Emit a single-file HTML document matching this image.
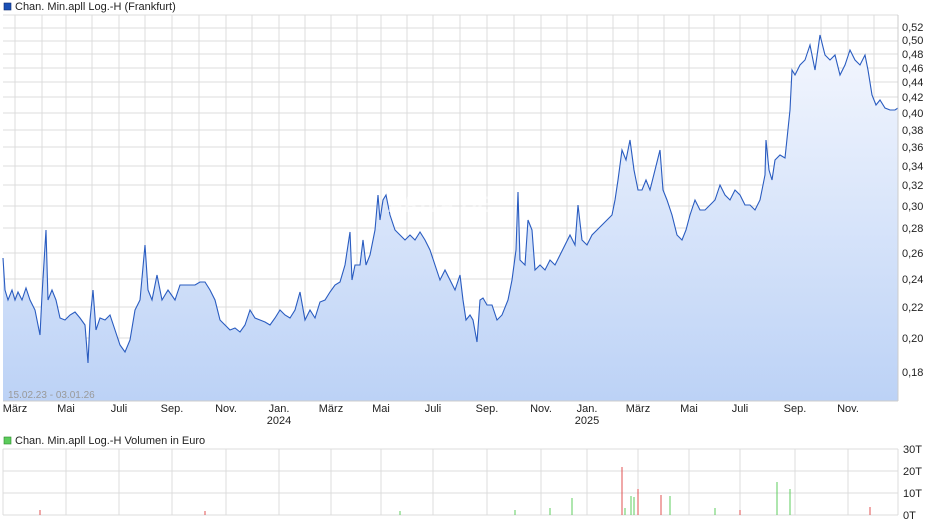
<!DOCTYPE html><html><head><style>body{margin:0;background:#fff;font-family:"Liberation Sans",sans-serif;}svg text{font-family:"Liberation Sans",sans-serif;font-size:11px;fill:#222}</style></head><body>
<svg width="940" height="526" xmlns="http://www.w3.org/2000/svg">
<defs><linearGradient id="g" x1="0" y1="0" x2="0" y2="1"><stop offset="0" stop-color="#f4f7fe"/><stop offset="1" stop-color="#bcd2f6"/></linearGradient></defs>
<rect x="4" y="3" width="7" height="7" fill="#1a4fb5" stroke="#0a2a70" stroke-width="0.6"/>
<text x="15" y="10">Chan. Min.apll Log.-H (Frankfurt)</text>
<g stroke="#dcdcdc" stroke-width="1">
<line x1="3" y1="15" x2="898" y2="15"/><line x1="3" y1="28" x2="898" y2="28"/><line x1="3" y1="41" x2="898" y2="41"/><line x1="3" y1="54" x2="898" y2="54"/><line x1="3" y1="68" x2="898" y2="68"/><line x1="3" y1="82" x2="898" y2="82"/><line x1="3" y1="97" x2="898" y2="97"/><line x1="3" y1="113" x2="898" y2="113"/><line x1="3" y1="130" x2="898" y2="130"/><line x1="3" y1="147" x2="898" y2="147"/><line x1="3" y1="166" x2="898" y2="166"/><line x1="3" y1="185" x2="898" y2="185"/><line x1="3" y1="206" x2="898" y2="206"/><line x1="3" y1="228" x2="898" y2="228"/><line x1="3" y1="253" x2="898" y2="253"/><line x1="3" y1="279" x2="898" y2="279"/><line x1="3" y1="307" x2="898" y2="307"/><line x1="3" y1="338" x2="898" y2="338"/><line x1="3" y1="372" x2="898" y2="372"/>
</g>
<g stroke="#dcdcdc"><line x1="15" y1="15" x2="15" y2="401"/><line x1="42" y1="15" x2="42" y2="401"/><line x1="66" y1="15" x2="66" y2="401"/><line x1="92" y1="15" x2="92" y2="401"/><line x1="119" y1="15" x2="119" y2="401"/><line x1="145" y1="15" x2="145" y2="401"/><line x1="172" y1="15" x2="172" y2="401"/><line x1="199" y1="15" x2="199" y2="401"/><line x1="226" y1="15" x2="226" y2="401"/><line x1="252" y1="15" x2="252" y2="401"/><line x1="279" y1="15" x2="279" y2="401"/><line x1="305" y1="15" x2="305" y2="401"/><line x1="331" y1="15" x2="331" y2="401"/><line x1="357" y1="15" x2="357" y2="401"/><line x1="381" y1="15" x2="381" y2="401"/><line x1="407" y1="15" x2="407" y2="401"/><line x1="433" y1="15" x2="433" y2="401"/><line x1="460" y1="15" x2="460" y2="401"/><line x1="487" y1="15" x2="487" y2="401"/><line x1="514" y1="15" x2="514" y2="401"/><line x1="541" y1="15" x2="541" y2="401"/><line x1="567" y1="15" x2="567" y2="401"/><line x1="587" y1="15" x2="587" y2="401"/><line x1="613" y1="15" x2="613" y2="401"/><line x1="638" y1="15" x2="638" y2="401"/><line x1="664" y1="15" x2="664" y2="401"/><line x1="689" y1="15" x2="689" y2="401"/><line x1="714" y1="15" x2="714" y2="401"/><line x1="740" y1="15" x2="740" y2="401"/><line x1="768" y1="15" x2="768" y2="401"/><line x1="795" y1="15" x2="795" y2="401"/><line x1="821" y1="15" x2="821" y2="401"/><line x1="848" y1="15" x2="848" y2="401"/><line x1="874" y1="15" x2="874" y2="401"/></g>
<polygon fill="url(#g)" points="3,401 3,258 5,290 8,300 12,290 15,300 18,292 22,300 26,288 30,300 35,310 40,335 42,295 46,230 48,300 52,290 56,300 60,318 65,320 70,315 75,312 80,318 85,325 88,363 90,320 93,290 96,330 100,318 105,320 110,315 115,330 120,345 125,352 130,340 135,310 140,300 145,245 148,290 152,300 157,275 162,300 168,290 175,300 180,285 188,285 195,285 200,282 205,282 210,290 215,300 220,320 225,325 230,330 235,328 240,332 245,325 250,310 255,318 260,320 265,322 270,325 275,318 280,310 285,315 290,318 295,310 300,292 305,320 310,310 315,318 320,302 325,300 330,292 335,285 340,282 345,265 350,232 352,280 355,265 360,265 363,240 366,265 370,255 375,230 378,195 380,220 383,200 386,195 390,215 395,230 400,235 405,240 410,235 415,240 420,232 425,240 430,250 435,265 440,280 445,270 450,280 455,290 460,275 463,300 466,320 470,315 473,320 477,342 480,300 483,298 487,305 492,305 497,320 502,315 508,300 512,280 516,250 518,192 520,260 525,265 528,220 532,230 535,270 540,265 545,270 550,260 555,265 560,255 565,245 570,235 575,245 578,205 582,240 587,245 592,235 597,230 602,225 607,220 612,215 615,200 618,180 622,150 626,160 630,140 634,170 638,190 642,190 646,180 650,190 655,170 660,150 663,190 667,200 672,215 677,235 682,240 686,230 690,215 695,200 700,210 705,210 710,205 715,200 720,185 725,195 730,200 735,190 740,195 745,205 750,205 755,210 760,200 765,175 766,140 769,170 772,180 775,160 780,155 785,158 790,110 792,70 795,75 800,65 805,60 810,45 815,70 820,35 825,55 830,60 835,55 840,75 845,65 850,50 855,60 860,65 865,55 868,70 872,95 876,105 880,100 885,108 890,110 895,110 898,108 898,401"/>
<polyline fill="none" stroke="#2a5cc0" stroke-width="1.1" points="3,258 5,290 8,300 12,290 15,300 18,292 22,300 26,288 30,300 35,310 40,335 42,295 46,230 48,300 52,290 56,300 60,318 65,320 70,315 75,312 80,318 85,325 88,363 90,320 93,290 96,330 100,318 105,320 110,315 115,330 120,345 125,352 130,340 135,310 140,300 145,245 148,290 152,300 157,275 162,300 168,290 175,300 180,285 188,285 195,285 200,282 205,282 210,290 215,300 220,320 225,325 230,330 235,328 240,332 245,325 250,310 255,318 260,320 265,322 270,325 275,318 280,310 285,315 290,318 295,310 300,292 305,320 310,310 315,318 320,302 325,300 330,292 335,285 340,282 345,265 350,232 352,280 355,265 360,265 363,240 366,265 370,255 375,230 378,195 380,220 383,200 386,195 390,215 395,230 400,235 405,240 410,235 415,240 420,232 425,240 430,250 435,265 440,280 445,270 450,280 455,290 460,275 463,300 466,320 470,315 473,320 477,342 480,300 483,298 487,305 492,305 497,320 502,315 508,300 512,280 516,250 518,192 520,260 525,265 528,220 532,230 535,270 540,265 545,270 550,260 555,265 560,255 565,245 570,235 575,245 578,205 582,240 587,245 592,235 597,230 602,225 607,220 612,215 615,200 618,180 622,150 626,160 630,140 634,170 638,190 642,190 646,180 650,190 655,170 660,150 663,190 667,200 672,215 677,235 682,240 686,230 690,215 695,200 700,210 705,210 710,205 715,200 720,185 725,195 730,200 735,190 740,195 745,205 750,205 755,210 760,200 765,175 766,140 769,170 772,180 775,160 780,155 785,158 790,110 792,70 795,75 800,65 805,60 810,45 815,70 820,35 825,55 830,60 835,55 840,75 845,65 850,50 855,60 860,65 865,55 868,70 872,95 876,105 880,100 885,108 890,110 895,110 898,108"/>
<text x="388" y="212" style="font-size:22px;font-style:italic;font-weight:bold;fill:#fff;opacity:.5">ARIVA.DE</text>
<line x1="898" y1="15" x2="898" y2="401" stroke="#ccc"/><line x1="3" y1="401" x2="898" y2="401" stroke="#ccc"/>
<text x="8" y="398" style="font-size:10px;fill:#999">15.02.23 - 03.01.26</text>
<g style="font-size:10px"><text x="902" y="31">0,52</text><text x="902" y="44">0,50</text><text x="902" y="58">0,48</text><text x="902" y="72">0,46</text><text x="902" y="86">0,44</text><text x="902" y="101">0,42</text><text x="902" y="117">0,40</text><text x="902" y="134">0,38</text><text x="902" y="151">0,36</text><text x="902" y="170">0,34</text><text x="902" y="189">0,32</text><text x="902" y="210">0,30</text><text x="902" y="232">0,28</text><text x="902" y="257">0,26</text><text x="902" y="283">0,24</text><text x="902" y="311">0,22</text><text x="902" y="342">0,20</text><text x="902" y="376">0,18</text></g>
<g style="font-size:10px" text-anchor="middle"><text x="15" y="412">März</text><text x="66" y="412">Mai</text><text x="119" y="412">Juli</text><text x="172" y="412">Sep.</text><text x="226" y="412">Nov.</text><text x="279" y="412">Jan.</text><text x="279" y="424">2024</text><text x="331" y="412">März</text><text x="381" y="412">Mai</text><text x="433" y="412">Juli</text><text x="487" y="412">Sep.</text><text x="541" y="412">Nov.</text><text x="587" y="412">Jan.</text><text x="587" y="424">2025</text><text x="638" y="412">März</text><text x="689" y="412">Mai</text><text x="740" y="412">Juli</text><text x="795" y="412">Sep.</text><text x="848" y="412">Nov.</text></g>
<rect x="4" y="437" width="7" height="7" fill="#5ccc5c" stroke="#2a8a2a" stroke-width="0.6"/>
<text x="15" y="444">Chan. Min.apll Log.-H Volumen in Euro</text>
<g stroke="#dcdcdc"><line x1="3" y1="449" x2="898" y2="449"/><line x1="3" y1="471" x2="898" y2="471"/><line x1="3" y1="493" x2="898" y2="493"/><line x1="3" y1="515" x2="898" y2="515"/><line x1="3" y1="449" x2="3" y2="515"/><line x1="898" y1="449" x2="898" y2="515"/><line x1="66" y1="449" x2="66" y2="515"/><line x1="119" y1="449" x2="119" y2="515"/><line x1="172" y1="449" x2="172" y2="515"/><line x1="226" y1="449" x2="226" y2="515"/><line x1="279" y1="449" x2="279" y2="515"/><line x1="331" y1="449" x2="331" y2="515"/><line x1="381" y1="449" x2="381" y2="515"/><line x1="433" y1="449" x2="433" y2="515"/><line x1="487" y1="449" x2="487" y2="515"/><line x1="541" y1="449" x2="541" y2="515"/><line x1="587" y1="449" x2="587" y2="515"/><line x1="638" y1="449" x2="638" y2="515"/><line x1="689" y1="449" x2="689" y2="515"/><line x1="740" y1="449" x2="740" y2="515"/><line x1="795" y1="449" x2="795" y2="515"/><line x1="848" y1="449" x2="848" y2="515"/></g>
<g stroke-width="1"><line x1="622" y1="467" x2="622" y2="515" stroke="#e05050"/><line x1="638" y1="489" x2="638" y2="515" stroke="#e05050"/><line x1="777" y1="482" x2="777" y2="515" stroke="#5ccc5c"/><line x1="790" y1="489" x2="790" y2="515" stroke="#5ccc5c"/><line x1="572" y1="498" x2="572" y2="515" stroke="#5ccc5c"/><line x1="631" y1="496" x2="631" y2="515" stroke="#5ccc5c"/><line x1="634" y1="497" x2="634" y2="515" stroke="#5ccc5c"/><line x1="661" y1="495" x2="661" y2="515" stroke="#e05050"/><line x1="670" y1="496" x2="670" y2="515" stroke="#5ccc5c"/><line x1="870" y1="507" x2="870" y2="515" stroke="#e05050"/><line x1="515" y1="510" x2="515" y2="515" stroke="#5ccc5c"/><line x1="550" y1="508" x2="550" y2="515" stroke="#5ccc5c"/><line x1="715" y1="508" x2="715" y2="515" stroke="#5ccc5c"/><line x1="625" y1="508" x2="625" y2="515" stroke="#5ccc5c"/><line x1="205" y1="511" x2="205" y2="515" stroke="#e05050"/><line x1="40" y1="510" x2="40" y2="515" stroke="#e05050"/><line x1="400" y1="511" x2="400" y2="515" stroke="#5ccc5c"/><line x1="740" y1="510" x2="740" y2="515" stroke="#e05050"/></g>
<g style="font-size:11px"><text x="903" y="453">30T</text><text x="903" y="475">20T</text><text x="903" y="497">10T</text><text x="903" y="519">0T</text></g>
</svg></body></html>
